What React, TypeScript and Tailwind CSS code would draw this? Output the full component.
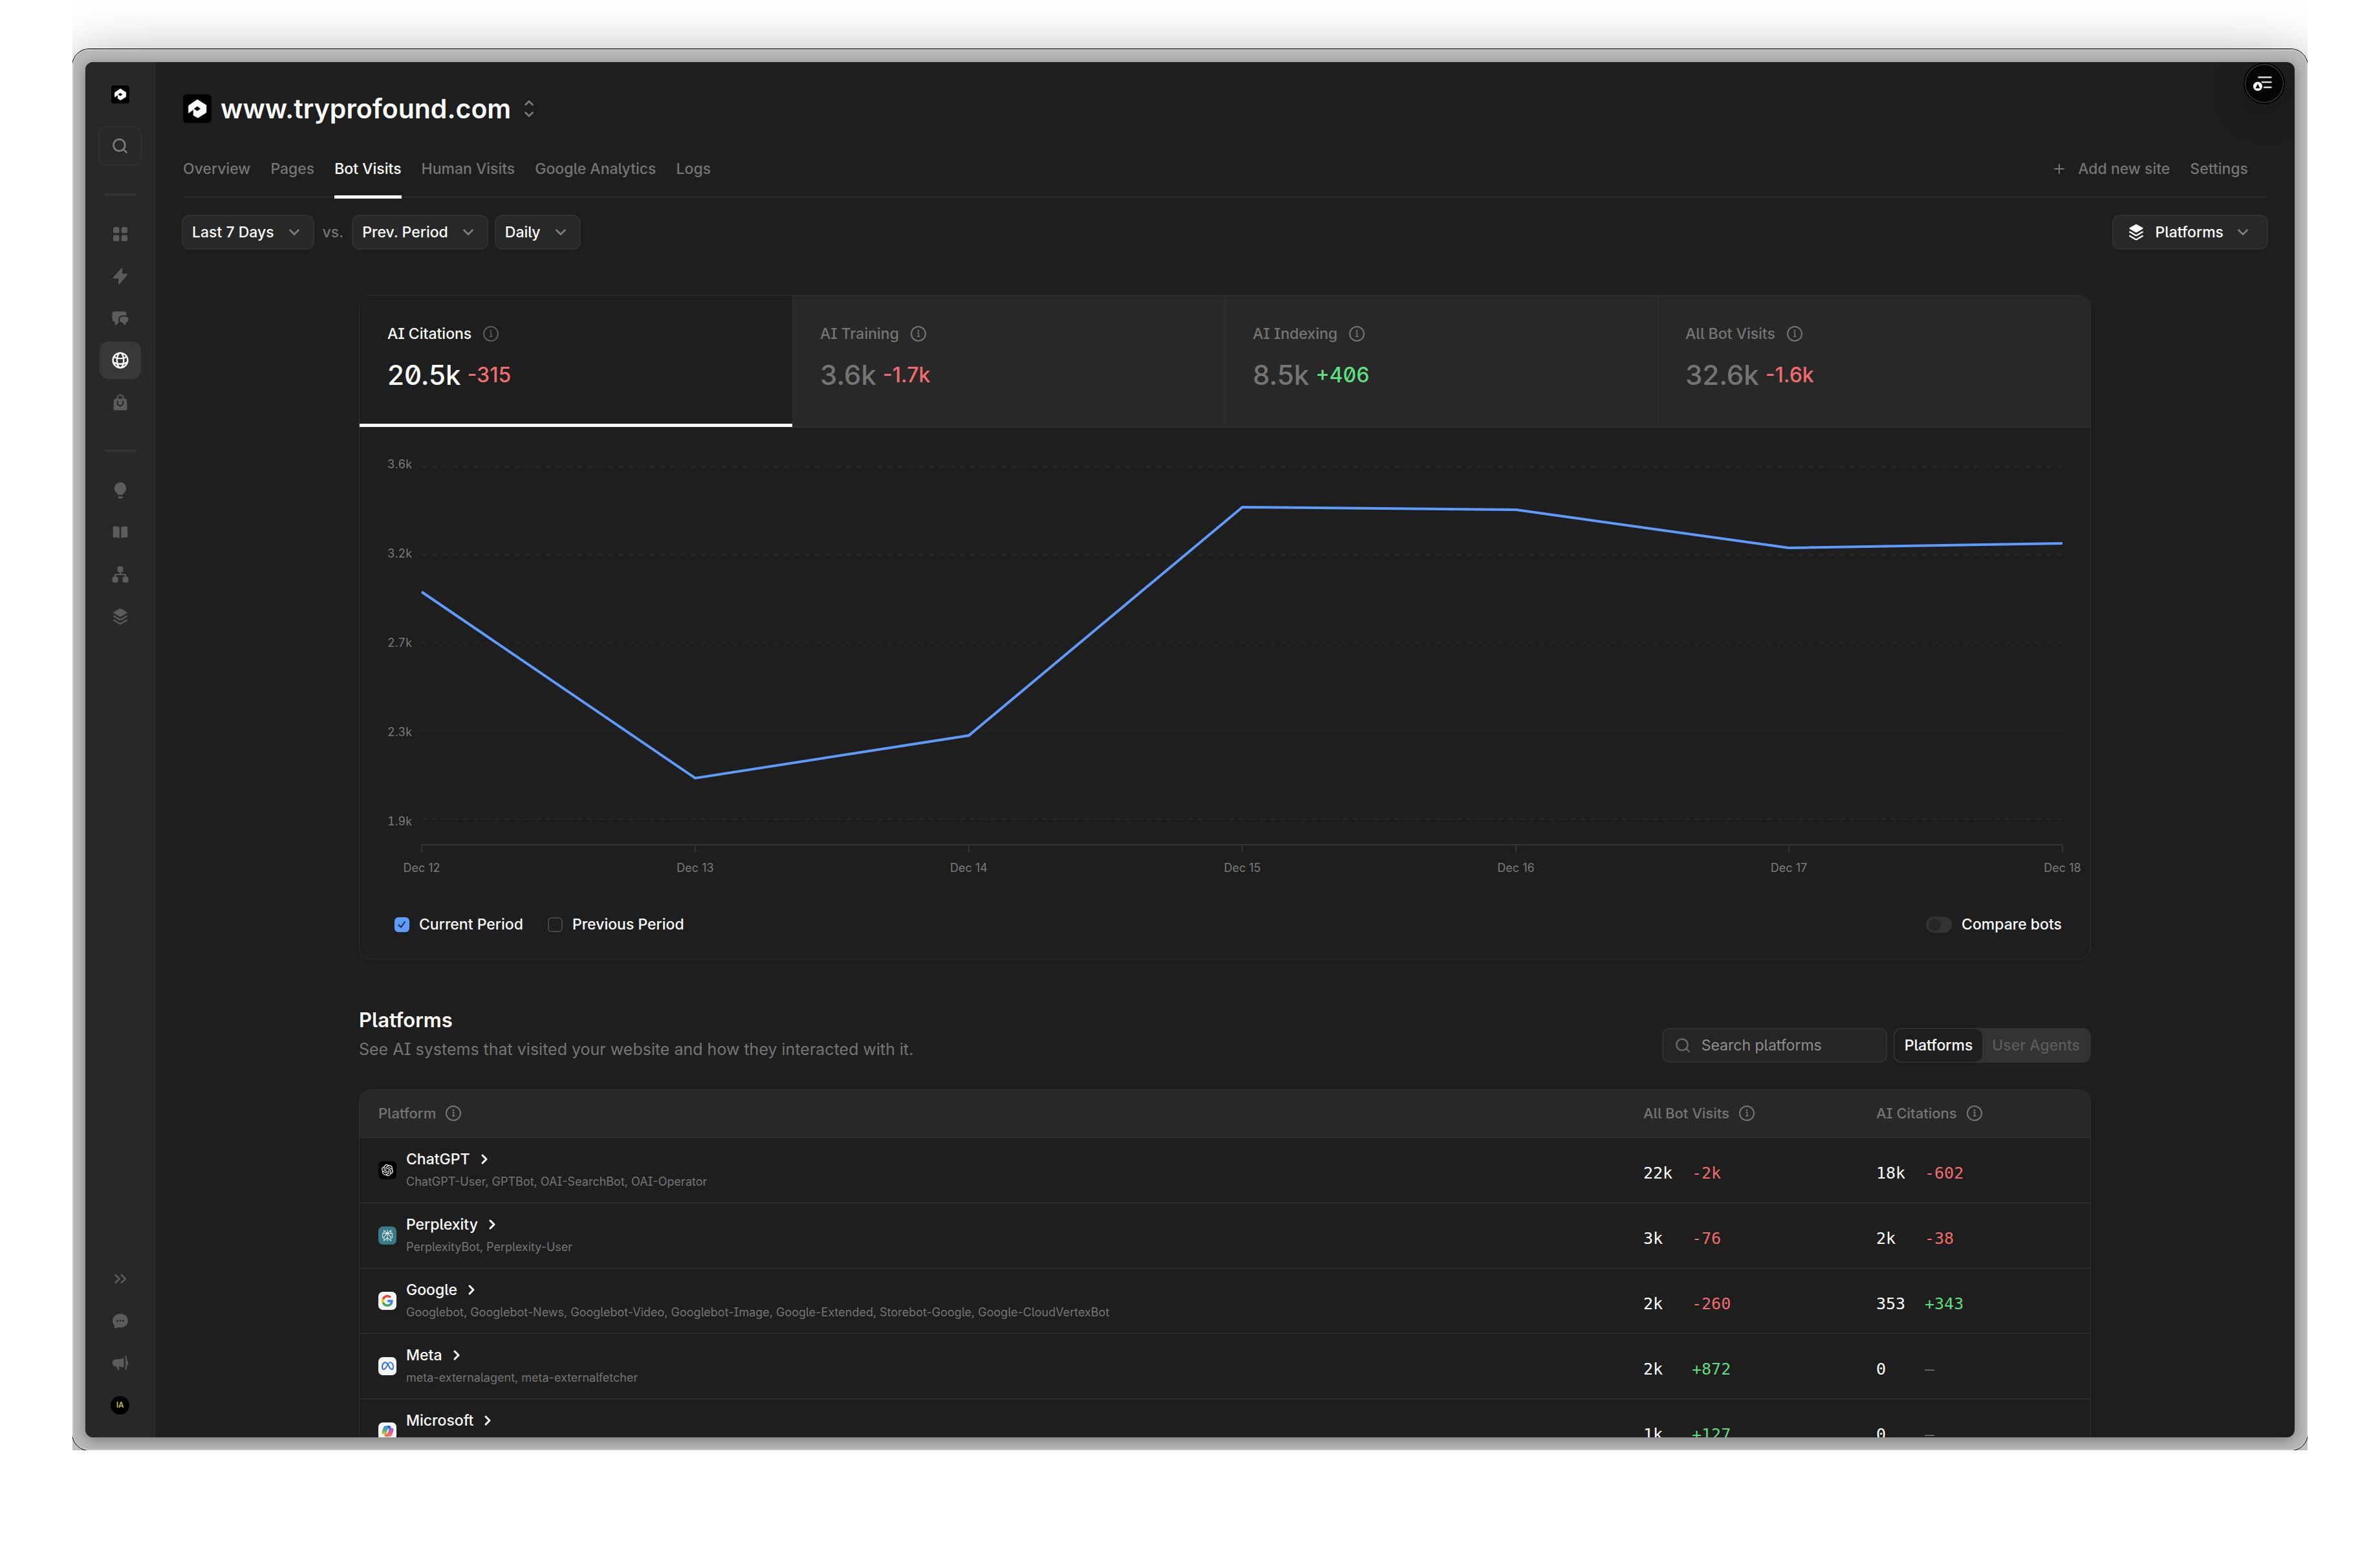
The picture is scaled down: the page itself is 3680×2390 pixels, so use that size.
import React from 'react';
import { ChevronDown, ChevronRight, Plus, Search } from 'lucide-react';
import { SiOpenai, SiPerplexity, SiMeta } from 'react-icons/si';

const cx = 'h-[26px] w-[26px]';

function ProfoundMark({ className }: { className: string }) {
  return (
    <svg viewBox="0 0 44 44" className={className} aria-hidden="true">
      <rect width="44" height="44" rx="6" fill="#000" />
      <path
        d="M22 8.5 35.500 17V27.500L23 35.500 16.500 32V22.500L9 28V17.500ZM22 17.500 15.500 22.200 22 26.700 28.500 22.200Z"
        fill="#fff"
        fillRule="evenodd"
        stroke="#fff"
        strokeWidth="1.5"
        strokeLinejoin="round"
      />
    </svg>
  );
}

function GridIcon() {
  return (
    <svg viewBox="0 0 26 26" className={cx} fill="currentColor">
      <rect x="2" y="2" width="9.300" height="9.300" rx="2.600" />
      <rect x="14.800" y="2" width="9.300" height="9.300" rx="2.600" />
      <rect x="2" y="14.500" width="9.300" height="9.300" rx="2.600" />
      <rect x="14.800" y="14.500" width="9.300" height="9.300" rx="2.600" />
    </svg>
  );
}

function BoltIcon() {
  return (
    <svg viewBox="0 0 26 26" className={cx} fill="currentColor">
      <path d="M14.400 1C15.400.2 16.600.8 16.400 2.100L15.700 9.300H22.800C24 9.300 24.400 10.500 23.600 11.400L11.800 24.900C10.900 25.800 9.500 25.200 9.700 24L10.500 16.500H3.200C2 16.500 1.600 15.300 2.300 14.500Z" />
    </svg>
  );
}

function ChatsIcon() {
  return (
    <svg viewBox="0 0 26 26" className={cx} fill="currentColor">
      <path d="M4 2.500H18.500A4 4 0 0 1 22.500 6.500V8.500H16.500C12.500 8.500 10 11.500 10 15C10 17.200 10.500 18.300 11 19L7 23.300C6 24.200 4.600 23.700 4.600 22.500V18.500C2 18.200.5 16.500.5 14V6A3.500 3.500 0 0 1 4 2.500Z" />
      <path d="M16.500 10.500H21A4.500 4.500 0 0 1 25.500 15C25.500 17.500 24 19.300 21.700 19.500V22C21.700 23.300 20.400 23.900 19.400 23.100L15.500 19.500C13.500 19.200 12 17.400 12 15A4.500 4.500 0 0 1 16.500 10.500Z" />
    </svg>
  );
}

function GlobeIcon() {
  return (
    <svg viewBox="0 0 26 26" className={cx} fill="none" stroke="currentColor" strokeWidth="2.400">
      <circle cx="13" cy="13" r="11.400" />
      <ellipse cx="13" cy="13" rx="5.200" ry="11.400" />
      <path d="M3.500 7.600C8 11 18 11 22.500 7.600M2.300 16C8 19.600 18 19.600 23.700 16" />
    </svg>
  );
}

function BagIcon() {
  return (
    <svg viewBox="0 0 26 26" className={cx} fill="none">
      <path d="M8.500 8V6A4.500 4.500 0 0 1 17.500 6V8" stroke="currentColor" strokeWidth="2.200" />
      <path d="M5.500 7.500H20.500A2.500 2.500 0 0 1 23 10L23.700 22.800A2.300 2.300 0 0 1 21.500 25.200H4.500A2.300 2.300 0 0 1 2.300 22.800L3 10A2.500 2.500 0 0 1 5.500 7.500Z" fill="currentColor" />
      <path d="M8.700 11.500V14A4.300 4.300 0 0 0 17.300 14V11.500" stroke="#282828" strokeWidth="2.300" strokeLinecap="round" />
    </svg>
  );
}

function BulbIcon() {
  return (
    <svg viewBox="0 0 26 26" className={cx} fill="currentColor">
      <path d="M13 .5A9.300 9.300 0 0 1 22.300 9.800C22.300 13.500 20.300 15.300 18.300 17.400L16.600 19.600A1.800 1.800 0 0 1 15.200 20.300H10.800A1.800 1.800 0 0 1 9.400 19.600L7.700 17.400C5.700 15.300 3.700 13.500 3.700 9.800A9.300 9.300 0 0 1 13 .5Z" />
      <rect x="9.300" y="22.600" width="7.400" height="3" rx="1.500" />
    </svg>
  );
}

function BookIcon() {
  return (
    <svg viewBox="0 0 26 26" className={cx} fill="currentColor">
      <path d="M2.800 4C5.500 3.600 8.500 3.600 10.800 4.600A1.300 1.300 0 0 1 11.700 5.700V22C9 20.700 6 20.500 2.800 21A1 1 0 0 1 1.800 20V5A1 1 0 0 1 2.800 4Z" />
      <path d="M23.200 4C20.500 3.600 17.500 3.600 15.200 4.600A1.300 1.300 0 0 0 14.300 5.700V22C17 20.700 20 20.500 23.200 21A1 1 0 0 0 24.200 20V5A1 1 0 0 0 23.200 4Z" />
    </svg>
  );
}

function TreeIcon() {
  return (
    <svg viewBox="0 0 26 26" className={cx} fill="currentColor">
      <rect x="8.500" y=".5" width="9" height="9" rx="2.600" />
      <rect x=".5" y="16.500" width="9" height="9" rx="2.600" />
      <rect x="16.500" y="16.500" width="9" height="9" rx="2.600" />
      <path d="M13 9V13M5 17V14.500A1.500 1.500 0 0 1 6.500 13H19.500A1.500 1.500 0 0 1 21 14.500V17" fill="none" stroke="currentColor" strokeWidth="2.200" />
    </svg>
  );
}

function LayersIcon() {
  return (
    <svg viewBox="0 0 26 26" className={cx} fill="currentColor">
      <path d="M12 .9A2.200 2.200 0 0 1 14 .9L23 6A1.100 1.100 0 0 1 23 8L14 13.200A2.200 2.200 0 0 1 12 13.200L3 8A1.100 1.100 0 0 1 3 6Z" />
      <path d="M3.200 12.600 12 17.700A2 2 0 0 0 14 17.700L22.800 12.600M3.200 18.800 12 23.900A2 2 0 0 0 14 23.900L22.800 18.800" fill="none" stroke="currentColor" strokeWidth="2.300" strokeLinecap="round" />
    </svg>
  );
}

function ExpandIcon() {
  return (
    <svg viewBox="0 0 26 26" className={cx} fill="none" stroke="currentColor" strokeWidth="2.500" strokeLinecap="round" strokeLinejoin="round">
      <path d="M5.500 7 11.700 13 5.500 19M14.700 7 21 13 14.700 19" />
    </svg>
  );
}

function CommentIcon() {
  return (
    <svg viewBox="0 0 26 26" className={cx}>
      <path d="M13.200 2C20 2 24.800 6.500 24.800 12.700C24.800 19 20 23.200 13.500 23.200C11.500 23.200 10 22.900 8.800 23.400L5 24.200C3.700 24.200 3.400 22.900 4.300 21.800C4.700 21 4.500 20.300 3.500 19.200C2 17.500 1.200 15.500 1.200 12.700C1.200 6.500 6.300 2 13.200 2Z" fill="currentColor" />
      <circle cx="8.500" cy="12.800" r="1.500" fill="#282828" />
      <circle cx="13" cy="12.800" r="1.500" fill="#282828" />
      <circle cx="17.500" cy="12.800" r="1.500" fill="#282828" />
    </svg>
  );
}

function MegaphoneIcon() {
  return (
    <svg viewBox="0 0 26 26" className={cx} fill="currentColor">
      <path d="M6 7.500C11 7.500 14.500 7 17 5.800A1 1 0 0 1 18.500 6.600V18.800A1 1 0 0 1 17 19.800C14.500 18.700 12.500 18.300 10.500 18.200L11.800 22C12.200 23.500 10.300 24.400 9.300 23L6.500 18.200H6A5.300 5.300 0 0 1 6 7.500Z" />
      <path d="M21.500 3.200C22.800 9 22.800 17 21.500 22.500" fill="none" stroke="currentColor" strokeWidth="2.500" strokeLinecap="round" />
      <path d="M23.500 9.500C26 11.500 26 14.500 23.500 16.500Z" />
    </svg>
  );
}

function InfoIcon() {
  return (
    <svg viewBox="0 0 26 26" className={cx} fill="none" stroke="currentColor" aria-hidden="true">
      <circle cx="13" cy="13" r="11" strokeWidth="2" />
      <path d="M11.400 11.500H13.300V17M11 17.300H15.500" strokeWidth="1.600" />
      <circle cx="13" cy="8.400" r="1.300" fill="currentColor" stroke="none" />
    </svg>
  );
}

function GoogleLogo() {
  return (
    <svg viewBox="0 0 48 48" className="h-[18px] w-[18px]">
      <path fill="#4285f4" d="M47 24.500c0-1.600-.2-3.200-.4-4.500H24v9h13c-.6 3-2.300 5.500-4.800 7.200v6h7.800C44.500 38 47 31.800 47 24.500z" />
      <path fill="#34a853" d="M24 48c6.500 0 12-2.100 16-5.800l-7.800-6c-2.200 1.400-4.900 2.300-8.200 2.300-6.200 0-11.500-4.200-13.400-9.900h-8v6.200C6.500 42.700 14.600 48 24 48z" />
      <path fill="#fbbc05" d="M10.600 28.600c-.5-1.500-.8-3-.8-4.600s.3-3.200.8-4.600v-6.200h-8C1 16.500 0 20.100 0 24s1 7.500 2.600 10.800z" />
      <path fill="#ea4335" d="M24 9.500c3.500 0 6.700 1.200 9.200 3.600l6.900-6.900C36 2.400 30.500 0 24 0 14.600 0 6.500 5.400 2.600 13.200l8 6.200C12.500 13.700 17.800 9.500 24 9.500z" />
    </svg>
  );
}

function CopilotLogo() {
  return (
    <svg viewBox="0 0 24 24" className="h-[19px] w-[19px]">
      <defs>
        <linearGradient id="cp-left" x1="0" y1="0" x2="0" y2="1">
          <stop offset="0" stopColor="#2f8fe8" />
          <stop offset=".55" stopColor="#4fb37c" />
          <stop offset="1" stopColor="#f2c230" />
        </linearGradient>
        <linearGradient id="cp-right" x1="0" y1="0" x2="0" y2="1">
          <stop offset="0" stopColor="#8f5be8" />
          <stop offset=".5" stopColor="#e85aa8" />
          <stop offset="1" stopColor="#f47a4a" />
        </linearGradient>
      </defs>
      <path d="M7.500 1.500H15L10 18H4.500C1 18 0 15.500.9 12.500L3.500 5C4.300 2.700 5.400 1.500 7.500 1.500Z" fill="url(#cp-left)" />
      <path d="M11 1.500H15.500C17.500 1.500 18 3 18.500 6H13.500Z" fill="#2450c8" />
      <path d="M16.500 22.500H9L14 6H19.500C23 6 24 8.500 23.100 11.500L20.500 19C19.700 21.300 18.600 22.500 16.500 22.500Z" fill="url(#cp-right)" />
      <path d="M13 22.500H8.500C6.500 22.500 6 21 5.500 18H10.500Z" fill="#f0653f" />
      <path d="M10.800 15.500 13.300 8.500" stroke="#fff" strokeWidth="2.400" />
    </svg>
  );
}

const mainNav = [
  { label: 'Dashboard', icon: <GridIcon /> },
  { label: 'Actions', icon: <BoltIcon /> },
  { label: 'Conversations', icon: <ChatsIcon /> },
  { label: 'Websites', icon: <GlobeIcon />, active: true },
  { label: 'Shopping', icon: <BagIcon /> },
];

const secondaryNav = [
  { label: 'Ideas', icon: <BulbIcon /> },
  { label: 'Guides', icon: <BookIcon /> },
  { label: 'Workflows', icon: <TreeIcon /> },
  { label: 'Platforms', icon: <LayersIcon /> },
];

const footerNav = [
  { label: 'Expand sidebar', icon: <ExpandIcon /> },
  { label: 'Feedback', icon: <CommentIcon /> },
  { label: 'Announcements', icon: <MegaphoneIcon /> },
];

const tabs = ['Overview', 'Pages', 'Bot Visits', 'Human Visits', 'Google Analytics', 'Logs'];

const stats = [
  { label: 'AI Citations', value: '20.5k', delta: '-315' },
  { label: 'AI Training', value: '3.6k', delta: '-1.7k' },
  { label: 'AI Indexing', value: '8.5k', delta: '+406' },
  { label: 'All Bot Visits', value: '32.6k', delta: '-1.6k' },
];

const yTicks = ['3.6k', '3.2k', '2.7k', '2.3k', '1.9k'];

const points = [
  { day: 'Dec 12', x: 96, y: 254 },
  { day: 'Dec 13', x: 519, y: 542 },
  { day: 'Dec 14', x: 942, y: 476 },
  { day: 'Dec 15', x: 1365, y: 123 },
  { day: 'Dec 16', x: 1788, y: 127 },
  { day: 'Dec 17', x: 2210, y: 186 },
  { day: 'Dec 18', x: 2633, y: 179 },
];

const platforms = [
  {
    name: 'ChatGPT',
    bots: 'ChatGPT-User, GPTBot, OAI-SearchBot, OAI-Operator',
    tile: 'bg-black text-white',
    logo: <SiOpenai size={18} />,
    visits: ['22k', '-2k'],
    citations: ['18k', '-602'],
  },
  {
    name: 'Perplexity',
    bots: 'PerplexityBot, Perplexity-User',
    tile: 'bg-[#397c88] text-white',
    logo: <SiPerplexity size={18} />,
    visits: ['3k', '-76'],
    citations: ['2k', '-38'],
  },
  {
    name: 'Google',
    bots: 'Googlebot, Googlebot-News, Googlebot-Video, Googlebot-Image, Google-Extended, Storebot-Google, Google-CloudVertexBot',
    tile: 'bg-[#f5f5f5]',
    logo: <GoogleLogo />,
    visits: ['2k', '-260'],
    citations: ['353', '+343'],
  },
  {
    name: 'Meta',
    bots: 'meta-externalagent, meta-externalfetcher',
    tile: 'bg-[#f5f5f5] text-[#2f6fe4]',
    logo: <SiMeta size={19} />,
    visits: ['2k', '+872'],
    citations: ['0', '–'],
  },
  {
    name: 'Microsoft',
    bots: 'bingbot, MicrosoftPreview',
    tile: 'bg-[#f5f5f5]',
    logo: <CopilotLogo />,
    visits: ['1k', '+127'],
    citations: ['0', '–'],
  },
];

function deltaColor(delta: string) {
  if (delta.startsWith('+')) return 'text-[#5fdd7f]';
  if (delta.startsWith('-')) return 'text-[#f16c6c]';
  return 'text-[#6b6b6b]';
}

function NavButton({ label, icon, active }: { label: string; icon: React.ReactNode; active?: boolean }) {
  return (
    <button
      aria-label={label}
      className={`flex h-[58px] w-16 items-center justify-center rounded-[14px] ${active ? 'bg-[#383838] text-white' : 'text-[#5c5c5c]'}`}
    >
      {icon}
    </button>
  );
}

function Sidebar() {
  return (
    <aside className="flex w-[108px] shrink-0 flex-col items-center border-r border-[#333] bg-[#282828] pt-9 pb-[21px]">
      <ProfoundMark className="h-7 w-7" />
      <button aria-label="Search" className="mt-[35px] flex h-[61px] w-[67px] shrink-0 items-center justify-center rounded-xl border-2 border-[#303030] text-[#7d7d7d]">
        <Search size={27} strokeWidth={2.4} />
      </button>
      <div className="mt-[43px] h-1 w-[50px] shrink-0 rounded-full bg-[#333]" />
      <nav className="mt-[30px] flex flex-col gap-[7px]">
        {mainNav.map((item) => (
          <NavButton key={item.label} {...item} />
        ))}
      </nav>
      <div className="mt-11 h-1 w-[50px] shrink-0 rounded-full bg-[#333]" />
      <nav className="mt-[30px] flex flex-col gap-[7px]">
        {secondaryNav.map((item) => (
          <NavButton key={item.label} {...item} />
        ))}
      </nav>
      <div className="mt-auto flex flex-col gap-[7px]">
        {footerNav.map((item) => (
          <NavButton key={item.label} {...item} />
        ))}
        <button aria-label="Account" className="flex h-[58px] w-16 items-center justify-center">
          <span className="flex h-[29px] w-[29px] items-center justify-center rounded-full bg-black font-['Roboto'] text-[12px] font-medium text-[#d9cf3f]">IA</span>
        </button>
      </div>
    </aside>
  );
}

function FilterSelect({ label, value }: { label: string; value: string }) {
  return (
    <div className="relative">
      <select
        aria-label={label}
        className="field-sizing-content h-[54px] appearance-none rounded-xl border-2 border-[#303030] bg-[#282828] pr-[60px] pl-3.5 font-medium text-white"
      >
        <option>{value}</option>
      </select>
      <ChevronDown size={26} strokeWidth={2.6} className="pointer-events-none absolute top-3.5 right-[18px] text-[#7d7d7d]" />
    </div>
  );
}

function Header() {
  return (
    <header className="px-[43px] pt-12">
      <div className="flex h-[48px] items-center">
        <ProfoundMark className="h-11 w-11" />
        <h1 className="ml-3.5 text-[41px] leading-[48px] font-semibold text-white">www.tryprofound.com</h1>
        <button aria-label="Switch site" className="ml-4 text-[#7d7d7d]">
          <svg viewBox="0 0 24 36" className="h-9 w-6" fill="none" stroke="currentColor" strokeWidth="2.500" strokeLinecap="round" strokeLinejoin="round">
            <path d="M6.500 12 12 6.500 17.500 12M6.500 24 12 29.500 17.500 24" />
          </svg>
        </button>
      </div>
      <div className="mt-[25px] flex items-end justify-between border-b border-[#333]">
        <nav className="flex gap-[31px]">
          {tabs.map((tab) => (
            <a
              key={tab}
              href="#"
              className={`-mb-[3px] h-[90px] border-b-[5px] pt-[27px] font-medium ${tab === 'Bot Visits' ? 'border-white text-white' : 'border-transparent text-[#757575]'}`}
            >
              {tab}
            </a>
          ))}
        </nav>
        <div className="flex h-[87px] gap-[31px] pt-[27px] pr-[29px] font-medium text-[#757575]">
          <a href="#" className="flex gap-[17px]">
            <Plus size={24} strokeWidth={2} className="mt-[5px]" />
            Add new site
          </a>
          <a href="#">Settings</a>
        </div>
      </div>
    </header>
  );
}

function Filters() {
  return (
    <div className="mt-[27px] flex items-center px-[41px]">
      <FilterSelect label="Date range" value="Last 7 Days" />
      <span className="mx-[13px] font-medium text-[#757575]">vs.</span>
      <FilterSelect label="Comparison" value="Prev. Period" />
      <div className="w-2.5" />
      <FilterSelect label="Granularity" value="Daily" />
      <div className="relative ml-auto">
        <select
          aria-label="Platforms"
          className="field-sizing-content h-[54px] appearance-none rounded-xl border-2 border-[#303030] bg-[#282828] pr-[67px] pl-16 font-medium text-white"
        >
          <option>Platforms</option>
        </select>
        <div className="pointer-events-none absolute top-3.5 left-6 text-white">
          <LayersIcon />
        </div>
        <ChevronDown size={26} strokeWidth={2.6} className="pointer-events-none absolute top-3.5 right-[26px] text-[#7d7d7d]" />
      </div>
    </div>
  );
}

function TrafficChart() {
  const line = points.map((p) => `${p.x},${p.y}`).join(' ');

  return (
    <svg viewBox="0 0 2676 715" className="block w-full" role="img" aria-label="AI citations per day">
      <defs>
        <pattern id="dots" x="95" y="54" width="12.600" height="12.600" patternUnits="userSpaceOnUse">
          <rect x="6" y="6" width="1.600" height="1.600" fill="#272727" />
        </pattern>
      </defs>
      <rect x="96" y="60" width="2537" height="560" fill="url(#dots)" />
      {yTicks.map((tick, i) => (
        <g key={tick}>
          <line x1="96" x2="2633" y1={60.5 + i * 136.2} y2={60.5 + i * 136.2} stroke="#303030" strokeDasharray="8 8" />
          <text x="43" y={63 + i * 138} fill="#7a7a7a" fontSize="18" className="tabular-nums">
            {tick}
          </text>
        </g>
      ))}
      <line x1="95" x2="2634" y1="645" y2="645" stroke="#333" strokeWidth="2" />
      {points.map((p) => (
        <g key={p.day}>
          <line x1={p.x} x2={p.x} y1="645" y2="657" stroke="#333" strokeWidth="2" />
          <text x={p.x} y="687" fill="#7a7a7a" fontSize="18" textAnchor="middle">
            {p.day}
          </text>
        </g>
      ))}
      <polyline points={line} fill="none" stroke="#5e9bfa" strokeWidth="4" />
    </svg>
  );
}

function ChartCard() {
  return (
    <section className="overflow-hidden rounded-[18px] border border-[#2f2f2f]">
      <div className="grid grid-cols-4 border-b border-[#333]">
        {stats.map((stat, i) => (
          <button
            key={stat.label}
            className={`flex h-[203px] flex-col items-start pt-[41px] ${i === 0 ? 'border-b-[5px] border-white bg-[#1e1e1e] pl-[43px]' : 'border-l border-[#303030] bg-[#282828] pl-[42px]'}`}
          >
            <div className={`flex h-9 items-center gap-[17px] font-medium ${i === 0 ? 'text-white' : 'text-[#757575]'}`}>
              {stat.label}
              <span className={i === 0 ? 'text-[#5c5c5c]' : 'text-[#757575]'}>
                <InfoIcon />
              </span>
            </div>
            <div className="mt-4 flex h-[60px] items-center gap-2.5 font-medium">
              <span className={`text-[42px] ${i === 0 ? 'text-white' : 'text-[#757575]'}`}>{stat.value}</span>
              <span className={`text-[32px] ${deltaColor(stat.delta)}`}>{stat.delta}</span>
            </div>
          </button>
        ))}
      </div>
      <TrafficChart />
      <div className="flex h-[106px] items-center justify-between pr-11 pl-[54px] font-medium text-white">
        <div className="flex gap-[38px]">
          <label className="flex items-center gap-[15px]">
            <span className="relative flex">
              <input type="checkbox" defaultChecked className="h-[23px] w-[23px] appearance-none rounded-md bg-[#5e9bfa]" />
              <svg viewBox="0 0 23 23" className="pointer-events-none absolute inset-0" fill="none" stroke="#16263f" strokeWidth="2">
                <path d="M6 11.500 10 15.500 16.500 6.500" />
              </svg>
            </span>
            Current Period
          </label>
          <label className="flex items-center gap-[15px]">
            <input type="checkbox" className="h-[23px] w-[23px] appearance-none rounded-md border-2 border-[#454545]" />
            Previous Period
          </label>
        </div>
        <label className="flex items-center gap-[15px]">
          <span className="relative flex">
            <input type="checkbox" role="switch" className="h-[25px] w-10 appearance-none rounded-full bg-[#333]" />
            <span className="pointer-events-none absolute top-[3px] left-1 h-[19px] w-[19px] rounded-full bg-[#262626]" />
          </span>
          Compare bots
        </label>
      </div>
    </section>
  );
}

function Metric({ data }: { data: string[] }) {
  return (
    <div className="flex pt-2.5 font-['DejaVu_Sans_Mono',monospace] text-[25px] text-white">
      <span className="w-[75px]">{data[0]}</span>
      <span className={deltaColor(data[1])}>{data[1]}</span>
    </div>
  );
}

function PlatformTable() {
  return (
    <section className="mt-[70px]">
      <div className="flex items-end justify-between">
        <div>
          <h2 className="text-[31px] leading-12 font-semibold text-white">Platforms</h2>
          <p className="text-[25px] leading-[42px] text-[#757575]">See AI systems that visited your website and how they interacted with it.</p>
        </div>
        <div className="flex gap-2.5 font-medium">
          <label className="flex h-[54px] w-[348px] items-center gap-4 rounded-xl border-2 border-[#303030] bg-[#252525] pl-[17px]">
            <Search size={26} strokeWidth={2.2} className="shrink-0 text-[#6b6b6b]" />
            <input
              type="search"
              aria-label="Search platforms"
              placeholder="Search platforms"
              className="w-full min-w-0 bg-transparent font-normal outline-none placeholder:text-[#8f8f8f]"
            />
          </label>
          <div className="flex h-[54px] rounded-xl border-2 border-[#303030] bg-[#333]">
            <button className="rounded-[10px] bg-[#1e1e1e] px-[15px] text-white">Platforms</button>
            <button className="px-[15px] text-[#5c5c5c]">User Agents</button>
          </div>
        </div>
      </div>
      <div className="mt-[41px] overflow-hidden rounded-t-[18px] border border-[#2f2f2f]">
        <table className="w-full table-fixed text-left">
          <thead>
            <tr className="h-[73px] border-b border-[#333] bg-[#282828] text-[22px] text-[#757575]">
              <th className="pl-[29px] font-medium">
                <div className="flex items-center gap-3.5">
                  Platform <InfoIcon />
                </div>
              </th>
              <th className="w-[360px] font-medium">
                <div className="flex items-center gap-3.5">
                  All Bot Visits <InfoIcon />
                </div>
              </th>
              <th className="w-[331px] font-medium">
                <div className="flex items-center gap-3.5">
                  AI Citations <InfoIcon />
                </div>
              </th>
            </tr>
          </thead>
          <tbody>
            {platforms.map((p) => (
              <tr key={p.name} className="h-[101px] border-b border-[#333]">
                <td className="pl-[29px]">
                  <div className="flex items-center gap-[15px]">
                    <span className={`flex h-7 w-7 shrink-0 items-center justify-center rounded-[7px] ${p.tile}`}>{p.logo}</span>
                    <div>
                      <a href="#" className="flex h-9 items-center gap-2.5 font-medium text-white">
                        {p.name}
                        <ChevronRight size={24} strokeWidth={3} />
                      </a>
                      <div className="h-[33px] text-[18px] leading-[33px] text-[#757575]">{p.bots}</div>
                    </div>
                  </div>
                </td>
                <td>
                  <Metric data={p.visits} />
                </td>
                <td>
                  <Metric data={p.citations} />
                </td>
              </tr>
            ))}
          </tbody>
        </table>
      </div>
    </section>
  );
}

export default function App() {
  return (
    <div className="flex h-screen flex-col bg-white px-28 pb-[148px] font-['Inter',sans-serif] text-[23px] leading-[34px]">
      <div className="min-h-0 flex-1 overflow-hidden pt-[76px]">
        <div className="h-full rounded-[26px] bg-[#b8b8b8] p-5 shadow-[0_0_0_1px_#000,0_36px_100px_rgba(0,0,0,0.6),inset_0_0_0_2px_#c8c8c8]">
          <div className="relative flex h-full overflow-hidden rounded-xl bg-[#1e1e1e] shadow-[0_4px_20px_rgba(0,0,0,0.35)]" style={{ fontFeatureSettings: '"ss02"' }}>
            <Sidebar />
            <main className="min-w-0 flex-1 overflow-hidden">
              <Header />
              <Filters />
              <div className="mx-auto mt-[70px] w-[81%] max-w-[2678px]">
                <ChartCard />
                <PlatformTable />
              </div>
            </main>
            <button
              aria-label="Open task list"
              className="absolute top-px right-[15px] flex h-16 w-16 items-center justify-center rounded-full border-2 border-black bg-[#050505] pr-1.5 shadow-[inset_0_0_0_1px_#555,0_14px_50px_rgba(0,0,0,0.25)]"
            >
              <svg viewBox="0 0 30 24" className="h-6 w-[30px]">
                <path d="M8.500 2.500H29.500M14 10H29.500M17 18H29.500" stroke="#ddd" strokeWidth="2.500" />
                <circle cx="8" cy="16.500" r="7" fill="#fff" />
                <path d="M8 12.500 11.500 19.500H4.500Z" fill="#050505" />
              </svg>
            </button>
          </div>
        </div>
      </div>
    </div>
  );
}
